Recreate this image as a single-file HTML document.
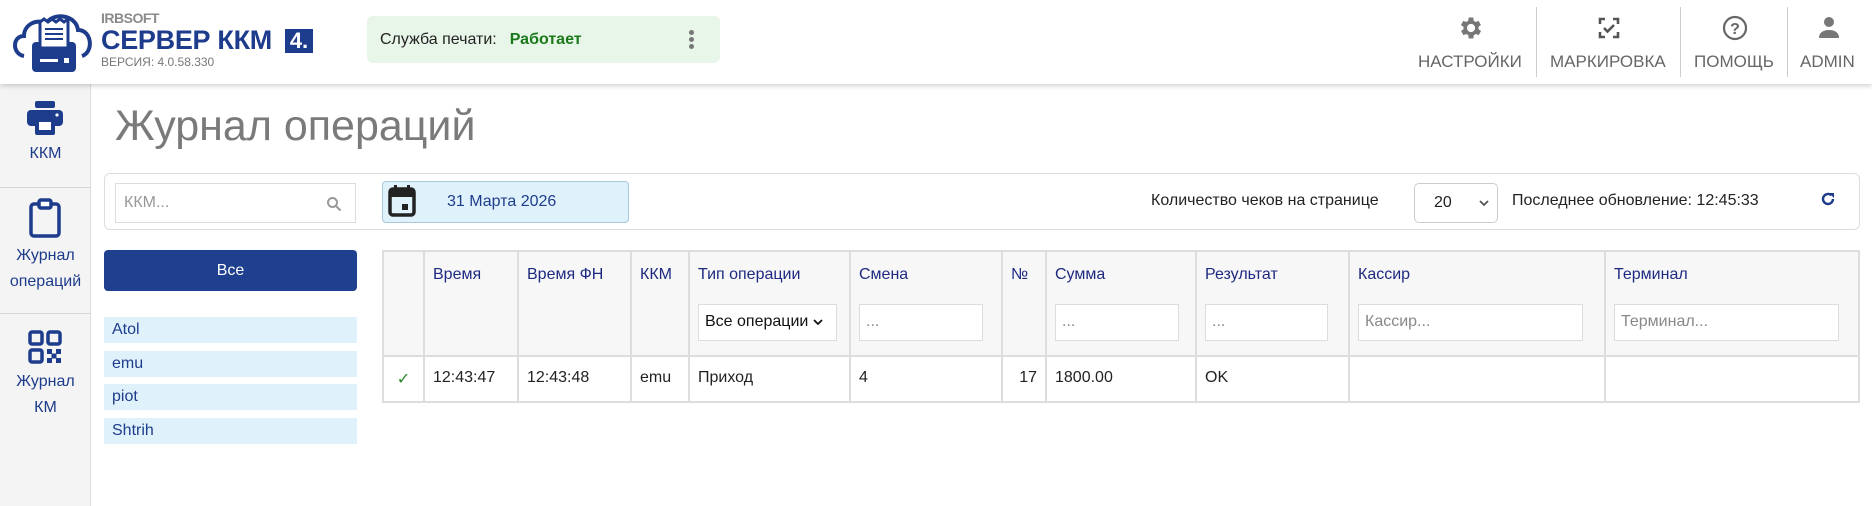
<!DOCTYPE html>
<html><head><meta charset="utf-8"><style>
*{box-sizing:border-box;margin:0;padding:0}
body{width:1872px;height:506px;overflow:hidden;background:#fff;font-family:"Liberation Sans",Arial,sans-serif;position:relative;color:#222}
.a{position:absolute}
.hdr{left:0;top:0;width:1872px;height:84px;background:#fff;box-shadow:0 2px 5px rgba(0,0,0,.18);z-index:2}
.side{left:0;top:84px;width:91px;height:422px;background:#f4f4f4;border-right:1px solid #ddd}
.sb{width:91px;text-align:center;color:#1e3c8c;font-size:16px;line-height:26px}
.hr{left:0;width:91px;height:1px;background:#d6d6d6}
.nav{font-size:17px;color:#666;text-transform:uppercase}
.dv{width:1px;height:70px;top:7px;background:#ccc}
.inp{border:1px solid #ddd;background:#fff;font-size:16px;color:#999;padding-left:8px;display:flex;align-items:center}
.li{left:104px;width:253px;height:26px;background:#dff2fc;color:#1e3c8c;font-size:16px;line-height:26px;padding-left:8px}
table{border-collapse:collapse;font-size:16px}
td,th{border:2px solid #ddd;text-align:left;vertical-align:top;font-weight:normal}
th{background:#f7f7f7;color:#1e2a80;height:105px;padding:14px 8px 0 8px}
td{height:46px;padding:12px 8px 0 8px;color:#222}
.f{margin-top:20px;height:37px;border:1px solid #ddd;background:#fff;font-size:16px;color:#888;padding:8px 6px;}
.dot{position:absolute;width:5px;height:5px;border-radius:50%;background:#777;left:0}
</style></head><body>
<div class="a hdr">
  <svg class="a" style="left:10px;top:12px" width="86" height="62" viewBox="0 0 86 62">
    <path d="M14 44 C2 42 2 24 14 24 C14 12 28 6 36 12 C42 0 66 2 68 18 C82 18 84 40 72 44" fill="none" stroke="#1e3c8c" stroke-width="4"/>
    <rect x="22" y="30" width="44" height="30" rx="4" fill="#1e3c8c"/>
    <path d="M30 10 L34 7 L38 10 L42 7 L46 10 L50 7 L54 10 L58 7 L58 36 L30 36 Z" fill="#fff" stroke="#1e3c8c" stroke-width="3"/>
    <rect x="35" y="16" width="18" height="2" fill="#1e3c8c"/><rect x="35" y="21" width="18" height="2" fill="#1e3c8c"/><rect x="35" y="26" width="18" height="2" fill="#1e3c8c"/>
    <rect x="30" y="47" width="18" height="3" fill="#fff"/><rect x="54" y="46" width="5" height="5" fill="#fff"/>
  </svg>
  <div class="a" style="left:101px;top:10px;font-size:14px;font-weight:bold;color:#8a8a8a;letter-spacing:-0.5px">IRBSOFT</div>
  <div class="a" style="left:101px;top:25px;font-size:27px;color:#1e3c8c;font-weight:bold;letter-spacing:-0.3px">СЕРВЕР ККМ</div>
  <div class="a" style="left:285px;top:29px;width:28px;height:24px;background:#1e3c8c;color:#fff;font-size:22px;font-weight:bold;line-height:24px;text-align:center">4.</div>
  <div class="a" style="left:101px;top:55px;font-size:12px;color:#777">ВЕРСИЯ: 4.0.58.330</div>
  <div class="a" style="left:367px;top:16px;width:353px;height:47px;background:#e8f5e9;border-radius:6px;font-size:16px;line-height:47px;padding-left:13px">Служба печати:<b style="color:#1a7a1a;margin-left:13px">Работает</b>
    <div class="a" style="left:322px;top:14px;width:5px;height:20px"><span class="dot" style="top:0"></span><span class="dot" style="top:7px"></span><span class="dot" style="top:14px"></span></div></div>
  <svg class="a" style="left:1457px;top:14px" width="28" height="28" viewBox="0 0 24 24"><path fill="#777" fill-rule="evenodd" d="M19.4 13a7.5 7.5 0 000-2l2.1-1.6-2-3.5-2.5 1a7 7 0 00-1.7-1L15 3h-4l-.4 2.9a7 7 0 00-1.7 1l-2.5-1-2 3.5L6.6 11a7.5 7.5 0 000 2l-2.1 1.6 2 3.5 2.5-1a7 7 0 001.7 1L11 21h4l.4-2.9a7 7 0 001.7-1l2.5 1 2-3.5zM13 15.5a3.5 3.5 0 110-7 3.5 3.5 0 010 7z" transform="translate(-1 0)"/></svg>
  <svg class="a" style="left:1597px;top:16px" width="24" height="24" viewBox="0 0 24 24" fill="none" stroke="#555" stroke-width="2.6"><path d="M3 8V3h5M16 3h5v5M21 16v5h-5M8 21H3v-5"/><path d="M7 12l3.5 3.5L17 9"/></svg>
  <svg class="a" style="left:1722px;top:15px" width="26" height="26" viewBox="0 0 26 26"><circle cx="13" cy="13" r="11" fill="none" stroke="#666" stroke-width="2.2"/><text x="13" y="19" font-size="16" font-weight="bold" text-anchor="middle" fill="#666" font-family="Liberation Sans">?</text></svg>
  <svg class="a" style="left:1817px;top:15px" width="24" height="24" viewBox="0 0 24 24" fill="#777"><circle cx="12" cy="7" r="5"/><path d="M2 23c0-6 5-8 10-8s10 2 10 8z"/></svg>
  <div class="a nav" style="left:1418px;top:52px">Настройки</div>
  <div class="a dv" style="left:1536px"></div>
  <div class="a nav" style="left:1550px;top:52px">Маркировка</div>
  <div class="a dv" style="left:1680px"></div>
  <div class="a nav" style="left:1694px;top:52px">Помощь</div>
  <div class="a dv" style="left:1787px"></div>
  <div class="a nav" style="left:1800px;top:52px">Admin</div>
</div>

<div class="a side"></div>
<svg class="a" style="left:26px;top:100px" width="38" height="36" viewBox="0 0 38 36" fill="#1e3c8c"><rect x="9" y="1" width="20" height="7" rx="2"/><rect x="1" y="10" width="36" height="16" rx="4"/><rect x="9" y="19" width="20" height="16" rx="2" fill="#1e3c8c"/><rect x="13" y="22" width="12" height="8" fill="#fff"/><circle cx="31" cy="15" r="1.6" fill="#fff"/></svg>
<div class="a sb" style="top:141px">ККМ</div>
<div class="a hr" style="top:187px"></div>
<svg class="a" style="left:28px;top:198px" width="34" height="40" viewBox="0 0 34 40" fill="none" stroke="#1e3c8c" stroke-width="3.5"><rect x="3" y="6" width="28" height="32" rx="3"/><rect x="11" y="2" width="12" height="8" rx="2" fill="#fff"/></svg>
<div class="a sb" style="top:243px">Журнал<br>операций</div>
<div class="a hr" style="top:313px"></div>
<svg class="a" style="left:28px;top:330px" width="34" height="34" viewBox="0 0 34 34"><g fill="none" stroke="#1e3c8c" stroke-width="3.5"><rect x="2" y="2" width="12" height="12" rx="2"/><rect x="20" y="2" width="12" height="12" rx="2"/><rect x="2" y="20" width="12" height="12" rx="2"/></g><g fill="#1e3c8c"><rect x="19" y="19" width="5" height="5"/><rect x="28" y="19" width="5" height="5"/><rect x="23.5" y="23.5" width="5" height="5"/><rect x="19" y="28" width="5" height="5"/><rect x="28" y="28" width="5" height="5"/></g></svg>
<div class="a sb" style="top:369px">Журнал<br>КМ</div>

<div class="a" style="left:115px;top:102px;font-size:43px;color:#7a7a7a">Журнал операций</div>

<div class="a" style="left:104px;top:173px;width:1756px;height:57px;border:1px solid #ddd;border-radius:6px"></div>
<div class="a inp" style="left:115px;top:183px;width:241px;height:40px">ККМ...</div>
<svg class="a" style="left:326px;top:196px" width="16" height="16" viewBox="0 0 16 16" fill="none" stroke="#999" stroke-width="2"><circle cx="6.5" cy="6.5" r="4.5"/><path d="M10 10l4.5 4.5"/></svg>
<div class="a" style="left:382px;top:181px;width:247px;height:42px;background:#dff1fb;border:1px solid #a9c8da;border-radius:4px;color:#1e3c8c;font-size:16px;line-height:40px;padding-left:64px">31 Марта 2026</div>
<svg class="a" style="left:388px;top:184px" width="28" height="34" viewBox="0 0 28 34"><rect x="2" y="5" width="24" height="26" rx="3" fill="none" stroke="#222" stroke-width="3.5"/><rect x="2" y="5" width="24" height="8" fill="#222"/><rect x="6" y="1" width="3" height="6" fill="#222"/><rect x="19" y="1" width="3" height="6" fill="#222"/><rect x="14" y="20" width="6" height="6" fill="#222"/></svg>
<div class="a" style="left:1151px;top:192px;font-size:16px">Количество чеков на странице</div>
<div class="a" style="left:1414px;top:183px;width:84px;height:40px;border:1px solid #ccc;border-radius:5px;font-size:16px;line-height:38px;padding-left:19px">20
  <svg class="a" style="left:64px;top:16px" width="10" height="7" viewBox="0 0 10 7"><path d="M1 1l4 4 4-4" fill="none" stroke="#555" stroke-width="1.8"/></svg></div>
<div class="a" style="left:1512px;top:192px;font-size:16px">Последнее обновление: 12:45:33</div>
<svg class="a" style="left:1820px;top:191px" width="16" height="16" viewBox="0 0 16 16"><path d="M13 8a5 5 0 11-1.5-3.6" fill="none" stroke="#1e3c8c" stroke-width="2.4"/><path d="M9 2h5v5z" fill="#1e3c8c"/></svg>

<div class="a" style="left:104px;top:250px;width:253px;height:41px;background:#1f3f8f;border-radius:4px;color:#fff;font-size:16px;line-height:41px;text-align:center">Все</div>
<div class="a li" style="top:317px">Atol</div>
<div class="a li" style="top:351px">emu</div>
<div class="a li" style="top:384px">piot</div>
<div class="a li" style="top:418px">Shtrih</div>

<table class="a" style="left:382px;top:250px;width:1478px">
<tr><th style="width:41px"></th><th style="width:94px">Время</th><th style="width:113px">Время ФН</th><th style="width:58px">ККМ</th><th style="width:161px">Тип операции<div class="f" style="color:#111;width:139px;padding-right:0">Все операции <svg width="10" height="7" viewBox="0 0 10 7"><path d="M1 1l4 4 4-4" fill="none" stroke="#111" stroke-width="1.8"/></svg></div></th><th style="width:152px">Смена<div class="f" style="width:124px">...</div></th><th style="width:44px">№</th><th style="width:150px">Сумма<div class="f" style="width:124px">...</div></th><th style="width:153px">Результат<div class="f" style="width:123px">...</div></th><th style="width:256px">Кассир<div class="f" style="width:225px">Кассир...</div></th><th>Терминал<div class="f" style="width:225px">Терминал...</div></th></tr>
<tr><td style="color:#2a8a2a;text-align:center">&#10003;</td><td>12:43:47</td><td>12:43:48</td><td>emu</td><td>Приход</td><td>4</td><td style="text-align:right">17</td><td>1800.00</td><td>OK</td><td></td><td></td></tr>
</table>
</body></html>
